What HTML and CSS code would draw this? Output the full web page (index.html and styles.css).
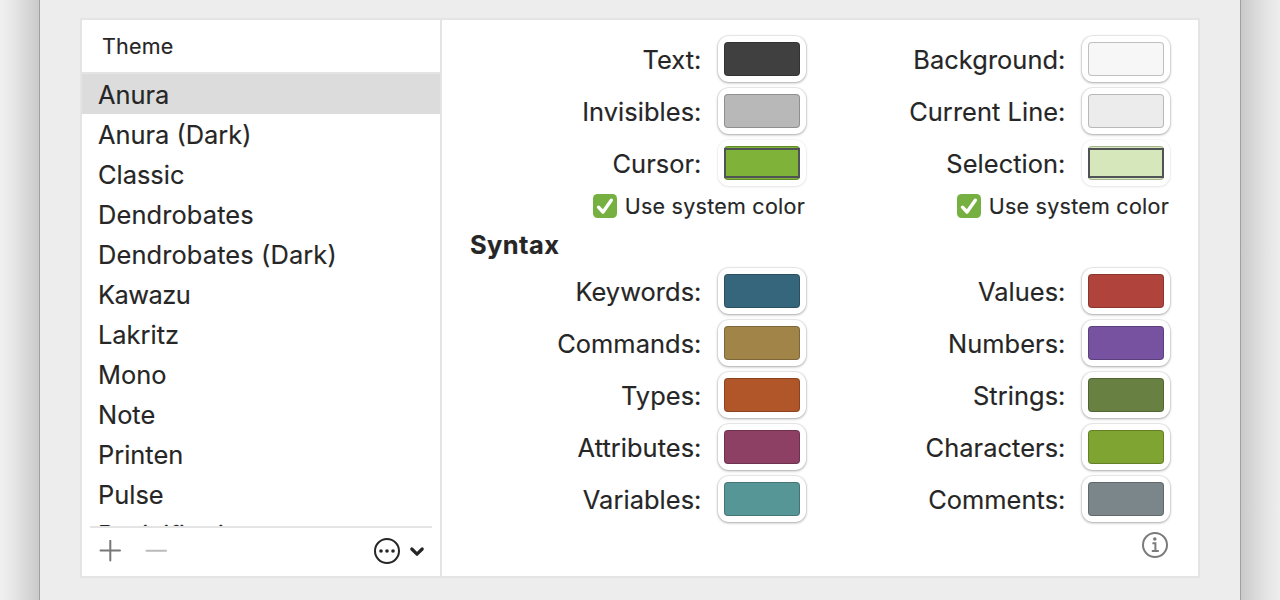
FILE: index.html
```html
<!DOCTYPE html>
<html lang="en">
<head>
<meta charset="utf-8">
<title>Theme settings</title>
<link rel="stylesheet" href="styles.css">
</head>
<body>
<div class="desktop">
<main class="window">
<div class="panel">
<aside class="sidebar">
<div class="sidebar-header">Theme</div>
<ul class="themes">
<li class="selected">Anura</li>
<li>Anura (Dark)</li>
<li>Classic</li>
<li class="wide">Dendrobates</li>
<li class="wide">Dendrobates (Dark)</li>
<li class="tight">Kawazu</li>
<li>Lakritz</li>
<li>Mono</li>
<li>Note</li>
<li>Printen</li>
<li>Pulse</li>
<li>Resinifictrix</li>
</ul>
<div class="toolbar">
<svg class="add" width="22" height="22" viewBox="0 0 22 22"><path d="M1.5 10.5H21M11.3 .8V20.6"/></svg>
<svg class="remove" width="22" height="22" viewBox="0 0 22 22"><path d="M1.5 10.8H21"/></svg>
<svg class="more" width="54" height="28" viewBox="0 0 54 28"><circle class="ring" cx="14" cy="14" r="12"/><circle cx="8" cy="14" r="1.8"/><circle cx="14" cy="14" r="1.8"/><circle cx="20" cy="14" r="1.8"/><path d="M38.8 12L44 17.2L49.2 12"/></svg>
</div>
</aside>
<section class="colors">
<div class="grid">
<span class="label">Text:</span><span class="well"><i class="swatch c-text"></i></span>
<span class="label">Background:</span><span class="well"><i class="swatch c-background"></i></span>
<span class="label">Invisibles:</span><span class="well"><i class="swatch c-invisibles"></i></span>
<span class="label">Current Line:</span><span class="well"><i class="swatch c-line"></i></span>
<span class="label">Cursor:</span><span class="well disabled"><i class="swatch c-cursor"></i></span>
<span class="label">Selection:</span><span class="well disabled"><i class="swatch c-selection"></i></span>
</div>
<div class="checks">
<div class="check"><svg width="24" height="24" viewBox="0 0 24 24"><rect width="24" height="24" rx="4.5"/><path d="M5.5 13.2L10 18L18.3 6.2"/></svg><span>Use system color</span></div>
<div class="check"><svg width="24" height="24" viewBox="0 0 24 24"><rect width="24" height="24" rx="4.5"/><path d="M5.5 13.2L10 18L18.3 6.2"/></svg><span>Use system color</span></div>
</div>
<h2>Syntax</h2>
<div class="grid">
<span class="label">Keywords:</span><span class="well"><i class="swatch c-keywords"></i></span>
<span class="label">Values:</span><span class="well"><i class="swatch c-values"></i></span>
<span class="label">Commands:</span><span class="well"><i class="swatch c-commands"></i></span>
<span class="label">Numbers:</span><span class="well"><i class="swatch c-numbers"></i></span>
<span class="label">Types:</span><span class="well"><i class="swatch c-types"></i></span>
<span class="label">Strings:</span><span class="well"><i class="swatch c-strings"></i></span>
<span class="label">Attributes:</span><span class="well"><i class="swatch c-attributes"></i></span>
<span class="label">Characters:</span><span class="well"><i class="swatch c-characters"></i></span>
<span class="label">Variables:</span><span class="well"><i class="swatch c-variables"></i></span>
<span class="label">Comments:</span><span class="well"><i class="swatch c-comments"></i></span>
</div>
<svg class="info" width="28" height="28" viewBox="0 0 28 28"><circle class="ring" cx="14" cy="14" r="12"/><circle cx="13.8" cy="8" r="1.8"/><path d="M11.4 12.2H14.4V20M10.8 20H17.8"/></svg>
</section>
</div>
</main>
</div>
</body>
</html>
```

FILE: styles.css
```css
*, *::before { box-sizing: border-box; }
body {
  margin: 0;
  color: #262626;
  font-family: Inter, "Liberation Sans", sans-serif;
  font-size: 25.4px;
  -webkit-text-stroke: .15px #262626;
}
.desktop {
  height: 600px;
  padding: 0 39px;
  overflow: hidden;
  background: linear-gradient(90deg, #f0f0f0, #e6e6e6 14px, #cacaca 39px, #cacaca 1241px, #e4e4e4 1266px, #eee 1280px);
}
.window {
  height: 600px;
  padding: 18px 40px 22px;
  border: solid #a0a0a0;
  border-width: 0 1px;
  background: #ededed;
}
.panel {
  display: flex;
  height: 560px;
  border: 2px solid #e4e4e4;
  background: #fff;
}
.sidebar {
  display: flex;
  flex-direction: column;
  width: 360px;
  border-right: 2px solid #e4e4e4;
}
.sidebar-header {
  height: 54px;
  padding-left: 20px;
  border-bottom: 2px solid #e4e4e4;
  font-size: 21.5px;
  line-height: 53px;
  letter-spacing: .2px;
}
.themes {
  height: 452px;
  margin: 0;
  padding: 0;
  overflow: hidden;
  list-style: none;
}
.themes li {
  height: 40px;
  padding-left: 16px;
  line-height: 42px;
}
.themes .wide { letter-spacing: .13px; }
.themes .tight { letter-spacing: -.5px; }
.themes .selected { background: #dcdcdc; }
.toolbar {
  display: flex;
  align-items: center;
  gap: 24px;
  height: 50px;
  margin: 0 8px;
  padding: 0 0 2px 9px;
  border-top: 2px solid #e4e4e4;
}
.toolbar svg { fill: none; stroke-width: 2; stroke-linecap: round; }
.toolbar .add { stroke: #777; }
.toolbar .remove { stroke: #bababa; }
.toolbar .more { margin-left: auto; margin-right: 5px; fill: #262626; }
.more .ring { fill: none; stroke: #262626; stroke-width: 2; }
.more path { fill: none; stroke: #262626; stroke-width: 3.2; stroke-linejoin: round; }
.colors {
  display: flex;
  flex-direction: column;
  flex: 1;
  padding: 16px 28px 0;
}
.grid {
  display: grid;
  grid-template-columns: 231px 88px 276px 88px;
  grid-auto-rows: 46px;
  row-gap: 6px;
  margin-left: 17px;
}
.label {
  padding-right: 16.5px;
  text-align: right;
  line-height: 48px;
  letter-spacing: .06px;
  white-space: nowrap;
}
.well {
  padding: 6px;
  border-radius: 11px;
  background: #fff;
  box-shadow: 0 0 1px 1px rgba(0,0,0,.07), 0 1px 3px rgba(0,0,0,.30);
}
.well.disabled { box-shadow: 0 0 1px 1px rgba(0,0,0,.04), 0 1px 3px rgba(0,0,0,.08); }
.swatch {
  display: block;
  height: 34px;
  border: 1px solid rgba(0,0,0,.22);
  border-radius: 4px;
}
.disabled .swatch { padding-top: 1px; }
.disabled .swatch::before {
  content: "";
  display: block;
  height: 30px;
  margin: 0 -1px;
  border: 2px solid #505355;
}
.c-text { background: #404040; }
.c-background { background: #f7f7f7; }
.c-invisibles { background: #b8b8b8; }
.c-line { background: #ececec; }
.c-cursor { background: #7eb238; }
.c-selection { background: #d6e7bb; }
.c-keywords { background: #35667c; }
.c-values { background: #b0443c; }
.c-commands { background: #a08448; }
.c-numbers { background: #7652a0; }
.c-types { background: #b15628; }
.c-strings { background: #688042; }
.c-attributes { background: #8e4064; }
.c-characters { background: #7fa431; }
.c-variables { background: #579696; }
.c-comments { background: #7b868b; }
.checks {
  display: grid;
  grid-template-columns: 364px 364px;
  height: 42px;
  margin-left: -29px;
  padding-top: 8px;
}
.check {
  display: flex;
  justify-content: flex-end;
  gap: 8px;
  height: 24px;
  font-size: 21.5px;
  line-height: 25px;
  letter-spacing: .25px;
  white-space: nowrap;
}
.check rect { fill: #76b041; }
.check path { fill: none; stroke: #fff; stroke-width: 3.4; stroke-linecap: round; stroke-linejoin: round; }
h2 {
  height: 40px;
  margin: 0;
  font-size: 25.4px;
  font-weight: 700;
  line-height: 34px;
  letter-spacing: .45px;
}
.info { align-self: flex-end; margin: 9px 1px 0 0; fill: #7b7b7b; }
.info .ring { fill: none; stroke: #7b7b7b; stroke-width: 2; }
.info path { fill: none; stroke: #7b7b7b; stroke-width: 2; }
```
